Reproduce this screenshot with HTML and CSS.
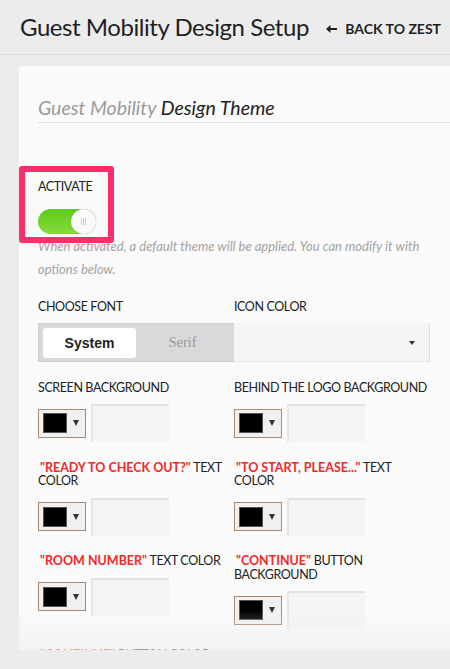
FILE: index.html
```html
<!DOCTYPE html>
<html>
<head>
<meta charset="utf-8">
<link rel="stylesheet" href="styles.css">
</head>
<body>
<header class="topbar">
  <h1 class="page-title">Guest Mobility Design Setup</h1>
  <a class="back-link" href="#"><svg class="back-arrow" width="11" height="8" viewBox="0 0 11 8"><path d="M0 4 L4.5 0 L4.5 3 L11 3 L11 5 L4.5 5 L4.5 8 Z" fill="#1f1f1f"/></svg>BACK TO ZEST</a>
</header>
<main class="main">
  <section class="panel">
    <div class="highlight"></div>
    <h2 class="theme-title"><span class="muted">Guest Mobility</span> Design Theme</h2>

    <div class="label activate-label">ACTIVATE</div>
    <div class="toggle"><div class="knob"><span></span><span></span><span></span></div></div>
    <p class="help">When activated, a default theme will be applied. You can modify it with options below.</p>

    <div class="grid">
      <div class="field">
        <div class="label">CHOOSE FONT</div>
        <div class="segmented">
          <div class="seg seg-active">System</div>
          <div class="seg seg-serif">Serif</div>
        </div>
      </div>
      <div class="field">
        <div class="label">ICON COLOR</div>
        <div class="select"><span class="select-arrow"></span></div>
      </div>

      <div class="field">
        <div class="label">SCREEN BACKGROUND</div>
        <div class="color-row"><div class="picker"><div class="swatch"></div><span class="caret"></span></div><div class="hex"></div></div>
      </div>
      <div class="field">
        <div class="label">BEHIND THE LOGO BACKGROUND</div>
        <div class="color-row"><div class="picker"><div class="swatch"></div><span class="caret"></span></div><div class="hex"></div></div>
      </div>

      <div class="field">
        <div class="label"><span class="red">"READY TO CHECK OUT?"</span> TEXT COLOR</div>
        <div class="color-row"><div class="picker"><div class="swatch"></div><span class="caret"></span></div><div class="hex"></div></div>
      </div>
      <div class="field">
        <div class="label"><span class="red">"TO START, PLEASE..."</span> TEXT COLOR</div>
        <div class="color-row"><div class="picker"><div class="swatch"></div><span class="caret"></span></div><div class="hex"></div></div>
      </div>

      <div class="field">
        <div class="label"><span class="red">"ROOM NUMBER"</span> TEXT COLOR</div>
        <div class="color-row"><div class="picker"><div class="swatch"></div><span class="caret"></span></div><div class="hex"></div></div>
      </div>
      <div class="field">
        <div class="label"><span class="red">"CONTINUE"</span> BUTTON BACKGROUND</div>
        <div class="color-row"><div class="picker"><div class="swatch"></div><span class="caret"></span></div><div class="hex"></div></div>
      </div>

      <div class="field">
        <div class="label"><span class="red">"CONTINUE"</span> BUTTON COLOR</div>
        <div class="color-row"><div class="picker"><div class="swatch"></div><span class="caret"></span></div><div class="hex"></div></div>
      </div>
    </div>
    <div class="fade"></div>
  </section>
</main>
</body>
</html>
```

FILE: styles.css
```css
* { box-sizing: border-box; }

html, body {
  margin: 0;
  padding: 0;
}

body {
  width: 450px;
  height: 669px;
  overflow: hidden;
  background: #ececec;
  font-family: Lato, "Open Sans", sans-serif;
  color: #222;
}

.topbar {
  height: 55px;
  display: flex;
  align-items: center;
  justify-content: space-between;
  padding: 0 9px 0 20px;
  border-bottom: 1px solid #dcdcdc;
}

.page-title {
  margin: 0;
  font-size: 24px;
  font-weight: 400;
  color: #1f1f1f;
  letter-spacing: -0.45px;
  padding-bottom: 1px;
}

.back-link {
  display: flex;
  align-items: center;
  text-decoration: none;
  color: #1f1f1f;
  font-size: 14px;
  font-weight: 700;
  padding-top: 2px;
}

.back-arrow {
  margin-right: 8px;
  margin-top: 1px;
}

.main {
  padding: 11px 0 0 19px;
}

.panel {
  position: relative;
  background: #fafafa;
  height: 584px;
  overflow: hidden;
  padding: 30px 0 0 19px;
}

.highlight {
  position: absolute;
  left: 0;
  top: 100px;
  width: 95px;
  height: 77px;
  border: 6px solid #fc2f6b;
  border-radius: 3px;
  z-index: 2;
}

.theme-title {
  margin: 0;
  font-size: 19.5px;
  line-height: 24px;
  font-style: italic;
  font-weight: 400;
  color: #222;
  padding-bottom: 2px;
  border-bottom: 1px solid #e2e2e2;
}

.muted { color: #9a9a9a; }

.label {
  font-size: 12.5px;
  line-height: 13.5px;
  letter-spacing: -0.4px;
  text-transform: uppercase;
  color: #222;
}

.activate-label {
  margin-top: 57px;
}

.toggle {
  margin-top: 15px;
  width: 58px;
  height: 25px;
  border-radius: 13px;
  background: linear-gradient(#5ecb1b, #86da3a);
  position: relative;
}

.knob {
  position: absolute;
  right: 0;
  top: 0;
  width: 25px;
  height: 25px;
  border-radius: 50%;
  background: #fafafa;
  box-shadow: 0 0 1px rgba(0,0,0,0.25);
  display: flex;
  justify-content: center;
  align-items: center;
  gap: 1px;
}

.knob span {
  width: 1px;
  height: 7px;
  background: #d0d0d0;
}

.help {
  margin: 1px 0 0 0;
  width: 392px;
  font-size: 13px;
  line-height: 23px;
  font-style: italic;
  color: #a3a3a3;
}

.grid {
  margin-top: 19px;
  display: grid;
  grid-template-columns: 196px 196px;
  align-items: start;
  row-gap: 18.5px;
}

.field .label {
  margin-bottom: 10px;
}

.red {
  color: #ee2a2a;
  font-weight: 700;
  letter-spacing: 0;
  padding-left: 2px;
}

.segmented {
  height: 39px;
  background: #d9d9d9;
  border: 1px solid #cfcfcf;
  border-right: none;
  display: flex;
  align-items: center;
  padding: 0 4px;
}

.seg {
  height: 30px;
  display: flex;
  align-items: center;
  justify-content: center;
}

.seg-active {
  width: 93px;
  background: #fff;
  border-radius: 3px;
  font-family: "Liberation Sans", Arial, sans-serif;
  font-weight: 700;
  font-size: 14px;
  color: #222;
}

.seg-serif {
  width: 93px;
  font-family: "Liberation Serif", serif;
  font-size: 14.5px;
  color: #999;
}

.select {
  height: 39px;
  background: #f5f5f5;
  border-right: 1px solid #e0e0e0;
  border-bottom: 1px solid #e6e6e6;
  position: relative;
}

.select-arrow {
  position: absolute;
  right: 14px;
  top: 18px;
  width: 0;
  height: 0;
  border-left: 3px solid transparent;
  border-right: 3px solid transparent;
  border-top: 4px solid #333;
}

.color-row {
  display: flex;
  align-items: center;
  gap: 5px;
  height: 38px;
}

.picker {
  width: 48px;
  height: 29px;
  border: 1px solid #a78a70;
  background: #f0f0f0;
  display: flex;
  align-items: center;
  padding-left: 4px;
}

.swatch {
  width: 24px;
  height: 20px;
  background: #000;
  border: 1px solid #555;
}

.caret {
  margin-left: 6px;
  width: 0;
  height: 0;
  border-left: 3.5px solid transparent;
  border-right: 3.5px solid transparent;
  border-top: 6px solid #333;
}

.hex {
  width: 78px;
  height: 38px;
  background: #f4f4f4;
  border-top: 2px solid #e3e3e3;
  border-left: 2px solid #e6e6e6;
}

.fade {
  position: absolute;
  left: 0;
  right: 0;
  bottom: 0;
  height: 40px;
  background: linear-gradient(rgba(245,245,245,0), rgba(238,238,238,0.6));
  pointer-events: none;
}
```
